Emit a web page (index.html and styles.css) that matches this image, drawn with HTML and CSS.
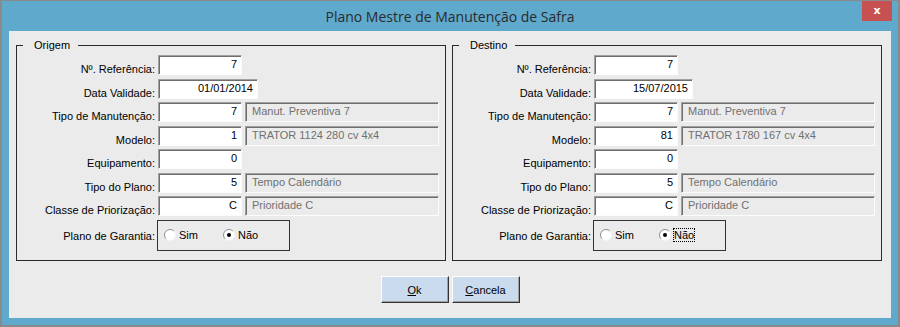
FILE: index.html
```html
<!DOCTYPE html>
<html>
	<head>
		<meta charset="UTF-8">
		<title>Plano Mestre de Manutenção de Safra</title>
		<link rel="stylesheet" href="styles.css">
	</head>
	<body>
		<div class="window">
			<div class="titlebar">Plano Mestre de Manutenção de Safra</div>
			<div class="close">x</div>
			<div class="client">
				<div class="groups">
					<fieldset class="group">
						<legend>Origem</legend>
						<div class="rows">
							<div class="row"><span class="lbl">Nº. Referência:</span><span class="fld">7</span></div>
							<div class="row"><span class="lbl">Data Validade:</span><span class="fld wide">01/01/2014</span></div>
							<div class="row"><span class="lbl">Tipo de Manutenção:</span><span class="fld">7</span><span class="desc">Manut. Preventiva 7</span></div>
							<div class="row"><span class="lbl">Modelo:</span><span class="fld">1</span><span class="desc">TRATOR 1124 280 cv 4x4</span></div>
							<div class="row"><span class="lbl">Equipamento:</span><span class="fld">0</span></div>
							<div class="row"><span class="lbl">Tipo do Plano:</span><span class="fld">5</span><span class="desc">Tempo Calendário</span></div>
							<div class="row"><span class="lbl">Classe de Priorização:</span><span class="fld">C</span><span class="desc">Prioridade C</span></div>
							<div class="row row-radio">
								<span class="lbl">Plano de Garantia:</span>
								<div class="radiobox">
									<span class="opt">
										<svg class="radio" width="12" height="12" viewBox="0 0 12 12"><circle cx="6" cy="6" r="5.5" fill="#fff"/><path d="M2.1 9.9A5.5 5.5 0 0 1 9.9 2.1" fill="none" stroke="#8f8f8f"/><path d="M9.9 2.1A5.5 5.5 0 0 1 2.1 9.9" fill="none" stroke="#f4f4f4"/></svg>
										Sim
									</span>
									<span class="opt opt2">
										<svg class="radio" width="12" height="12" viewBox="0 0 12 12"><circle cx="6" cy="6" r="5.5" fill="#fff"/><path d="M2.1 9.9A5.5 5.5 0 0 1 9.9 2.1" fill="none" stroke="#8f8f8f"/><path d="M9.9 2.1A5.5 5.5 0 0 1 2.1 9.9" fill="none" stroke="#f4f4f4"/><circle cx="6" cy="6" r="2" fill="#000"/></svg>
										Não
									</span>
								</div>
							</div>
						</div>
					</fieldset>
					<fieldset class="group">
						<legend>Destino</legend>
						<div class="rows">
							<div class="row"><span class="lbl">Nº. Referência:</span><span class="fld">7</span></div>
							<div class="row"><span class="lbl">Data Validade:</span><span class="fld wide2">15/07/2015</span></div>
							<div class="row"><span class="lbl">Tipo de Manutenção:</span><span class="fld">7</span><span class="desc">Manut. Preventiva 7</span></div>
							<div class="row"><span class="lbl">Modelo:</span><span class="fld">81</span><span class="desc">TRATOR 1780 167 cv 4x4</span></div>
							<div class="row"><span class="lbl">Equipamento:</span><span class="fld">0</span></div>
							<div class="row"><span class="lbl">Tipo do Plano:</span><span class="fld">5</span><span class="desc">Tempo Calendário</span></div>
							<div class="row"><span class="lbl">Classe de Priorização:</span><span class="fld">C</span><span class="desc">Prioridade C</span></div>
							<div class="row row-radio">
								<span class="lbl">Plano de Garantia:</span>
								<div class="radiobox">
									<span class="opt">
										<svg class="radio" width="12" height="12" viewBox="0 0 12 12"><circle cx="6" cy="6" r="5.5" fill="#fff"/><path d="M2.1 9.9A5.5 5.5 0 0 1 9.9 2.1" fill="none" stroke="#8f8f8f"/><path d="M9.9 2.1A5.5 5.5 0 0 1 2.1 9.9" fill="none" stroke="#f4f4f4"/></svg>
										Sim
									</span>
									<span class="opt opt2">
										<svg class="radio" width="12" height="12" viewBox="0 0 12 12"><circle cx="6" cy="6" r="5.5" fill="#fff"/><path d="M2.1 9.9A5.5 5.5 0 0 1 9.9 2.1" fill="none" stroke="#8f8f8f"/><path d="M9.9 2.1A5.5 5.5 0 0 1 2.1 9.9" fill="none" stroke="#f4f4f4"/><circle cx="6" cy="6" r="2" fill="#000"/></svg>
										<span class="focus">Não</span>
									</span>
								</div>
							</div>
						</div>
					</fieldset>
				</div>
				<div class="buttons">
					<button type="button"><u>O</u>k</button>
					<button type="button"><u>C</u>ancela</button>
				</div>
			</div>
		</div>
	</body>
</html>
```
FILE: styles.css
```css
*{margin: 0;padding: 0;}
body{background: #fff;font-size: 11px;font-family: "Liberation Sans", Arial, sans-serif;color: #000;}
.window{
	width: 900px;
	height: 327px;
	box-sizing: border-box;
	border: 2px solid #8a8a8a;
	border-top-width: 1px;
	background: #5fa9cd;
	padding: 0 7px 7px;
	position: relative;
	display: flex;
	flex-direction: column;
}
.titlebar{
	height: 30px;
	line-height: 31px;
	text-align: center;
	font-family: "Open Sans", "Noto Sans", sans-serif;
	font-size: 14px;
	color: #2b2b2b;
}
.close{
	position: absolute;
	top: 0;
	right: 6px;
	width: 30px;
	height: 20px;
	background: #c75050;
	color: #fff;
	font-family: "DejaVu Sans", sans-serif;
	font-weight: bold;
	font-size: 11px;
	line-height: 19px;
	text-align: center;
}
.client{
	flex: 1;
	background: #ebebeb;
	padding: 0 7px;
}
.groups{
	display: flex;
	gap: 6px;
	padding-top: 7px;
}
.group{
	width: 430px;
	height: 223px;
	box-sizing: border-box;
	border: 1px solid #2a2a2a;
	padding: 0;
	margin: 0;
}
.group legend{
	margin-left: 6px;
	padding: 0 8px 0 11px;
	line-height: 14px;
}
.rows{
	display: flex;
	flex-direction: column;
	gap: 3.5px;
	padding-top: 3px;
}
.row{
	display: flex;
	align-items: flex-start;
	height: 20px;
}
.lbl{
	width: 138px;
	text-align: right;
	line-height: 13px;
	margin-top: 8px;
	white-space: nowrap;
}
.fld,.desc{
	height: 20px;
	box-sizing: border-box;
	border: 1px solid;
	border-color: #a0a0a0 #fcfcfc #fcfcfc #a0a0a0;
	box-shadow: inset 1px 1px 0 #6e6e6e;
	line-height: 17px;
	white-space: nowrap;
}
.fld{
	width: 84px;
	margin-left: 3px;
	background: #fff;
	text-align: right;
	padding-right: 4px;
}
.fld.wide{width: 100px;}
.fld.wide2{width: 99px;}
.desc{
	width: 194px;
	margin-left: 3px;
	background: #ebebeb;
	color: #707070;
	padding-left: 6px;
}
.row-radio{
	height: 31px;
}
.row-radio .lbl{
	margin-top: 10px;
}
.radiobox{
	width: 133px;
	height: 31px;
	box-sizing: border-box;
	margin-left: 2px;
	border: 1px solid #333;
	display: flex;
	align-items: center;
	padding-left: 6px;
}
.opt{
	display: flex;
	align-items: center;
	gap: 3px;
	width: 59px;
}
.radio{display: block;}
.focus{
	outline: 1px dotted #000;
	outline-offset: 0;
}
.buttons{
	display: flex;
	justify-content: center;
	gap: 3px;
	padding-top: 15px;
}
.buttons button{
	width: 68px;
	height: 27px;
	box-sizing: border-box;
	background: #c9dbec;
	border: 1px solid;
	border-color: #fdfdfd #333 #333 #fdfdfd;
	box-shadow: inset -1px -1px 0 #a0a0a0;
	font-family: "Liberation Sans", Arial, sans-serif;
	font-size: 11px;
	color: #000;
}
.buttons u{text-decoration: underline;}
```
